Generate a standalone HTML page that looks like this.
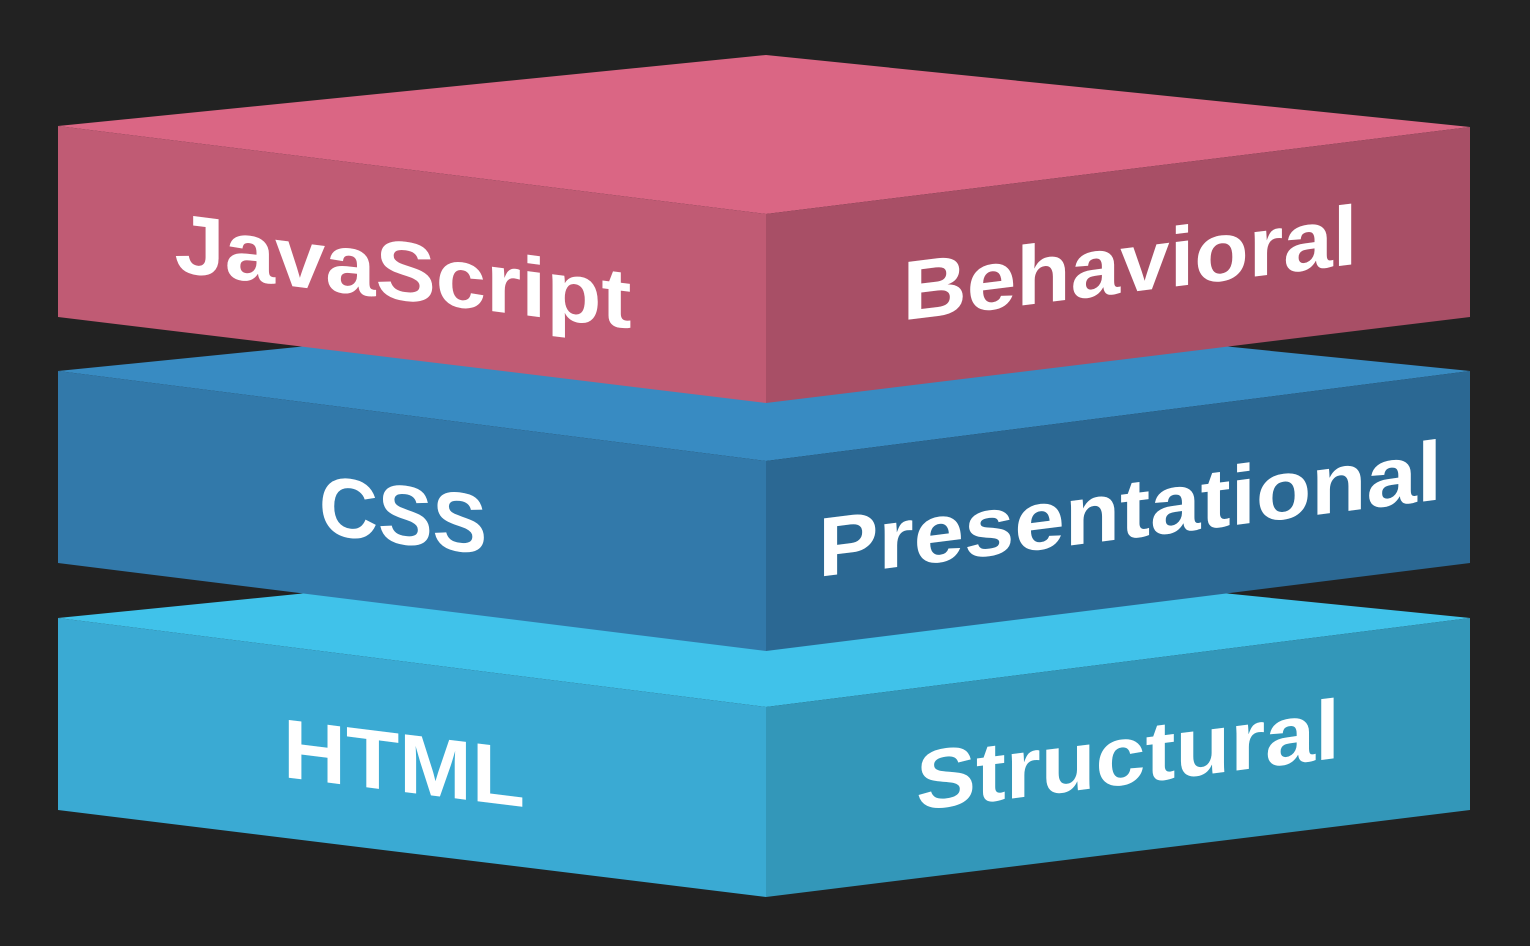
<!DOCTYPE html>
<html><head><meta charset="utf-8"><style>
html,body{margin:0;padding:0;background:#222;width:1530px;height:946px;overflow:hidden}
svg{display:block}
text{font-family:"Liberation Sans",sans-serif;font-weight:bold;font-size:84px;fill:#fff}
</style></head><body>
<svg width="1530" height="946" viewBox="0 0 1530 946">
<rect width="1530" height="946" fill="#222"/>
<polygon points="58,618 766,547 1470,618 766,707" fill="#40c2ea"/>
<polygon points="58,618 766,707 766,897 58,810" fill="#3aaad3"/>
<polygon points="766,707 1470,618 1470,810 766,897" fill="#3397b9"/>
<polygon points="58,371 766,300 1470,371 766,461" fill="#388bc2"/>
<polygon points="58,371 766,461 766,651 58,563" fill="#3279aa"/>
<polygon points="766,461 1470,371 1470,563 766,651" fill="#2b6893"/>
<polygon points="58,126 766,55 1470,127 766,214" fill="#da6684"/>
<polygon points="58,126 766,214 766,403 58,317" fill="#c05b74"/>
<polygon points="766,214 1470,127 1470,317 766,403" fill="#a84f66"/>

<g text-anchor="middle">
<text transform="translate(403,270) skewY(7.1)" y="30" textLength="457" lengthAdjust="spacingAndGlyphs">JavaScript</text>
<text transform="translate(1130,262) skewY(-7.1)" y="30" textLength="455" lengthAdjust="spacingAndGlyphs">Behavioral</text>
<text transform="translate(403,514) skewY(7.1)" y="30" textLength="168" lengthAdjust="spacingAndGlyphs">CSS</text>
<text transform="translate(1130,508) skewY(-7.1)" y="30" textLength="624" lengthAdjust="spacingAndGlyphs">Presentational</text>
<text transform="translate(404,762) skewY(7.1)" y="30" textLength="242" lengthAdjust="spacingAndGlyphs">HTML</text>
<text transform="translate(1128,754) skewY(-7.1)" y="30" textLength="424" lengthAdjust="spacingAndGlyphs">Structural</text>
</g>
</svg>
</body></html>
